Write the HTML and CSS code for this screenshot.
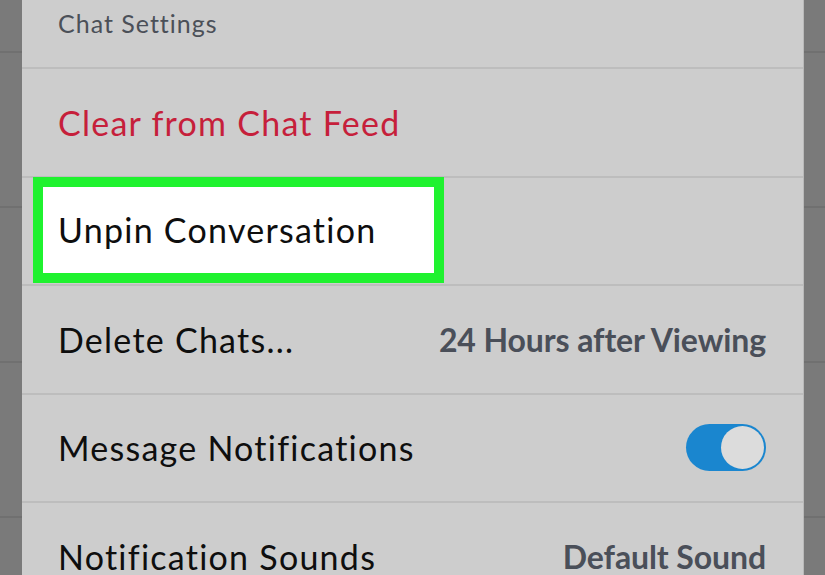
FILE: index.html
```html
<!DOCTYPE html>
<html lang="en">
<head>
<meta charset="utf-8">
<title>Chat Settings</title>
<link rel="stylesheet" href="styles.css">
</head>
<body>
<div class="backdrop">
  <div class="bg-row bg-row-first"></div>
  <div class="bg-row"></div>
  <div class="bg-row"></div>
  <div class="bg-row"></div>
</div>
<div class="sheet">
  <div class="row header"><span class="header-text">Chat Settings</span></div>
  <div class="row"><span class="label danger">Clear from Chat Feed</span></div>
  <div class="row row-hl">
    <div class="highlight"><span class="label">Unpin Conversation</span></div>
  </div>
  <div class="row"><span class="label">Delete Chats...</span><span class="value">24 Hours after Viewing</span></div>
  <div class="row"><span class="label">Message Notifications</span><span class="toggle"><span class="knob"></span></span></div>
  <div class="row"><span class="label">Notification Sounds</span><span class="value">Default Sound</span></div>
</div>
</body>
</html>
```
FILE: styles.css
```css
html, body {
  margin: 0;
  padding: 0;
}
body {
  width: 825px;
  height: 575px;
  overflow: hidden;
  background: #7a7a7a;
  position: relative;
  font-family: "Lato", "Open Sans", sans-serif;
}
.backdrop {
  display: flex;
  flex-direction: column;
}
.bg-row {
  height: 153px;
  border-bottom: 2px solid #707070;
}
.bg-row-first {
  height: 51px;
}
.sheet {
  position: absolute;
  left: 22px;
  top: -39.5px;
  width: 781px;
  background: #cdcdcd;
  display: flex;
  flex-direction: column;
  box-shadow: 1px 0 0 #b9b9b9;
}
.row {
  height: 106.5px;
  border-bottom: 2px solid #bdbdbd;
  display: flex;
  align-items: center;
  justify-content: space-between;
  padding: 0 37px 0 36px;
}
.header {
  padding-top: 19px;
  height: 87.5px;
}
.header-text {
  font-size: 25px;
  color: #4b5058;
  letter-spacing: 1px;
}
.label {
  font-size: 34px;
  color: #0e0e0e;
  letter-spacing: 1.25px;
}
.danger {
  color: #c61f3b;
}
.value {
  font-size: 32px;
  font-weight: 700;
  color: #4a4f59;
  letter-spacing: -0.1px;
}
.row-hl {
  padding-left: 11px;
  align-items: flex-start;
}
.highlight {
  box-sizing: border-box;
  width: 411px;
  height: 106px;
  margin-top: -1px;
  border: 10px solid #1ff22f;
  background: #ffffff;
  display: flex;
  align-items: center;
  padding-left: 15px;
}
.toggle {
  width: 80px;
  height: 47px;
  border-radius: 24px;
  background: #1a86cf;
  display: flex;
  align-items: center;
  justify-content: flex-end;
  padding-right: 2px;
  box-sizing: border-box;
}
.knob {
  width: 43px;
  height: 43px;
  border-radius: 50%;
  background: #dcdcdc;
}
```
